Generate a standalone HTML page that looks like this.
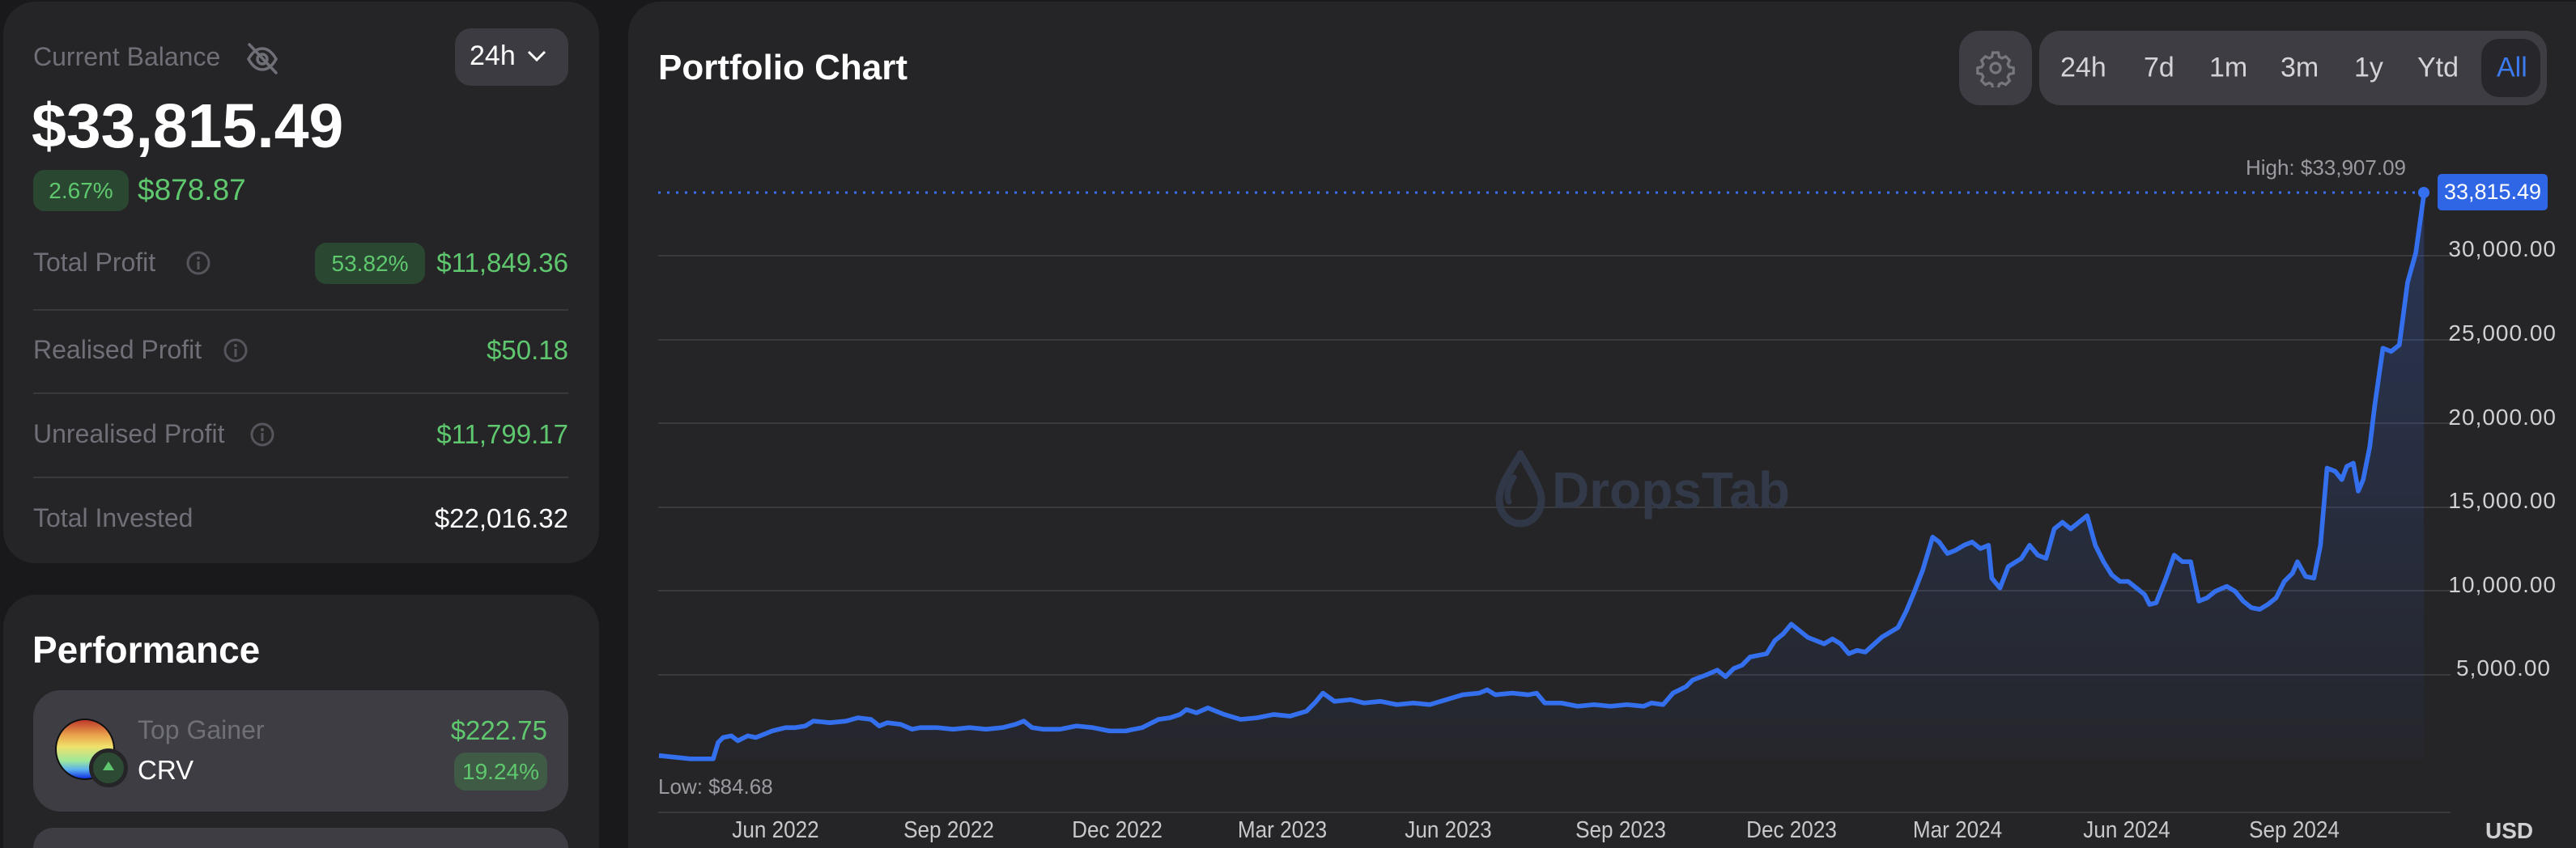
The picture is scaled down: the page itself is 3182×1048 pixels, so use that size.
<!DOCTYPE html>
<html><head><meta charset="utf-8"><style>
*{margin:0;padding:0;box-sizing:border-box}
html,body{width:3182px;height:1048px;overflow:hidden}
body{background:#19191c;font-family:"Liberation Sans",sans-serif;position:relative}
.a{position:absolute;white-space:nowrap}
.card{position:absolute;background:#252528;border-radius:40px}
.g{color:#5fc86e}.mut{color:#6f6f77}
.badge{position:absolute;background:#2a4731;border-radius:14px;color:#5fc86e;text-align:center}
.div{position:absolute;left:41px;width:661px;height:2px;background:#38383d}
.tl{font-size:32px;color:#6f6f77}
.per{font-size:34px;color:#d4d4d8;transform:translateY(-50%)}
.yl{font-size:28px;color:#d0d0d4;right:24px;letter-spacing:1px}
.xl{font-size:29px;color:#c8c8cc;top:1010px;transform:translateX(-50%) scaleX(.9)}
</style></head><body>
<div class="card" style="left:4px;top:2px;width:736px;height:694px"></div>
<div class="a tl" style="left:41px;top:52px">Current Balance</div>
<svg class="a" style="left:302px;top:50px" width="44" height="44" viewBox="0 0 44 44"><g fill="none" stroke="#6f6f77" stroke-width="3.5" stroke-linecap="round"><path d="M5 23c5-9 11-13 17-13s12 4 17 13c-5 9-11 13-17 13S10 32 5 23z"/><circle cx="22" cy="23" r="6"/><path d="M6 5l33 35"/></g></svg>
<div class="a" style="left:562px;top:35px;width:140px;height:71px;background:#3c3b41;border-radius:20px"></div>
<div class="a" style="left:580px;top:50px;font-size:34px;color:#fff">24h</div>
<svg class="a" style="left:650px;top:60px" width="26" height="18"><path d="M3 4l10 10 10-10" fill="none" stroke="#fff" stroke-width="3"/></svg>
<div class="a" style="left:39px;top:112px;font-size:77px;font-weight:bold;color:#fff">$33,815.49</div>
<div class="badge" style="left:41px;top:210px;width:118px;height:51px;line-height:51px;font-size:28px">2.67%</div>
<div class="a g" style="left:170px;top:214px;font-size:37px">$878.87</div>
<div class="a tl" style="left:41px;top:306px">Total Profit</div>
<svg class="a" style="left:229px;top:309px" width="32" height="32"><circle cx="16" cy="16" r="13" fill="none" stroke="#55555c" stroke-width="3"/><rect x="14.5" y="14" width="3" height="10" fill="#55555c"/><circle cx="16" cy="10" r="2" fill="#55555c"/></svg>
<div class="badge" style="left:389px;top:300px;width:136px;height:51px;line-height:51px;font-size:28px">53.82%</div>
<div class="a g" style="left:535px;top:306px;font-size:33px;width:167px;text-align:right">$11,849.36</div>
<div class="div" style="top:382px"></div>
<div class="a tl" style="left:41px;top:414px">Realised Profit</div>
<svg class="a" style="left:275px;top:417px" width="32" height="32"><circle cx="16" cy="16" r="13" fill="none" stroke="#55555c" stroke-width="3"/><rect x="14.5" y="14" width="3" height="10" fill="#55555c"/><circle cx="16" cy="10" r="2" fill="#55555c"/></svg>
<div class="a g" style="left:500px;top:414px;font-size:33px;width:202px;text-align:right">$50.18</div>
<div class="div" style="top:485px"></div>
<div class="a tl" style="left:41px;top:518px">Unrealised Profit</div>
<svg class="a" style="left:308px;top:521px" width="32" height="32"><circle cx="16" cy="16" r="13" fill="none" stroke="#55555c" stroke-width="3"/><rect x="14.5" y="14" width="3" height="10" fill="#55555c"/><circle cx="16" cy="10" r="2" fill="#55555c"/></svg>
<div class="a g" style="left:500px;top:518px;font-size:33px;width:202px;text-align:right">$11,799.17</div>
<div class="div" style="top:589px"></div>
<div class="a tl" style="left:41px;top:622px">Total Invested</div>
<div class="a" style="left:500px;top:622px;font-size:33px;width:202px;text-align:right;color:#fff">$22,016.32</div>

<div class="card" style="left:4px;top:735px;width:736px;height:313px;border-radius:40px 40px 0 0"></div>
<div class="a" style="left:40px;top:776px;font-size:46px;font-weight:bold;color:#fff">Performance</div>
<div class="a" style="left:41px;top:853px;width:661px;height:150px;background:#3e3d44;border-radius:34px"></div>
<div class="a" style="left:68px;top:888px;width:74px;height:76px;border-radius:50%;border:2px solid #111;background:linear-gradient(#c0392b 0%,#e8a04a 25%,#f0e06a 45%,#9ee89a 70%,#5ab0f0 85%,#1030e0 100%)"></div>
<div class="a" style="left:110px;top:925px;width:48px;height:48px;border-radius:50%;background:#2c4a34;border:5px solid #252528"></div>
<svg class="a" style="left:124px;top:938px" width="20" height="18"><path d="M10 3l7 11H3z" fill="#5fc86e"/></svg>
<div class="a" style="left:170px;top:884px;font-size:32px;color:#6f6f77">Top Gainer</div>
<div class="a" style="left:170px;top:933px;font-size:33px;color:#fff">CRV</div>
<div class="a g" style="left:500px;top:884px;font-size:33px;width:176px;text-align:right">$222.75</div>
<div class="a" style="left:561px;top:930px;width:115px;height:47px;background:#3f5a45;border-radius:14px;color:#5fc86e;font-size:28px;text-align:center;line-height:47px">19.24%</div>
<div class="a" style="left:41px;top:1023px;width:661px;height:25px;background:#3e3d44;border-radius:34px 34px 0 0"></div>

<div class="card" style="left:776px;top:2px;width:2406px;height:1046px;border-radius:40px 0 0 0"></div>
<div class="a" style="left:813px;top:59px;font-size:44px;font-weight:bold;color:#fff">Portfolio Chart</div>
<div class="a" style="left:2420px;top:38px;width:90px;height:92px;background:#3e3d44;border-radius:26px"></div>
<svg class="a" style="left:2441px;top:60px" width="48" height="48" viewBox="0 0 24 24"><g fill="none" stroke="#77777e" stroke-width="1.6"><circle cx="12" cy="12" r="3"/><path d="M10.3 2.5h3.4l.5 2.6 1.7.9 2.4-1.1 2.4 2.4-1.1 2.4.9 1.7 2.6.5v3.4l-2.6.5-.9 1.7 1.1 2.4-2.4 2.4-2.4-1.1-1.700.9-.5 2.6h-3.4l-.5-2.6-1.7-.9-2.4 1.1-2.4-2.4 1.1-2.4-.9-1.7-2.6-.5v-3.4l2.6-.5.9-1.7-1.1-2.4 2.4-2.4 2.4 1.1 1.7-.9z"/></g></svg>
<div class="a" style="left:2519px;top:38px;width:627px;height:92px;background:#3e3d44;border-radius:26px"></div>
<div class="a" style="left:3065px;top:48px;width:73px;height:72px;background:#27272b;border-radius:22px"></div>
<div class="a per" style="left:2545px;top:84px">24h</div>
<div class="a per" style="left:2648px;top:84px">7d</div>
<div class="a per" style="left:2729px;top:84px">1m</div>
<div class="a per" style="left:2817px;top:84px">3m</div>
<div class="a per" style="left:2908px;top:84px">1y</div>
<div class="a per" style="left:2986px;top:84px">Ytd</div>
<div class="a per" style="left:3084px;top:84px;color:#3b7af0">All</div>

<svg class="a" style="left:0;top:0" width="3182" height="1048">
<defs><linearGradient id="f" x1="0" y1="0" x2="0" y2="1"><stop offset="0" stop-color="#3b6ef0" stop-opacity=".22"/><stop offset="1" stop-color="#3b6ef0" stop-opacity=".02"/></linearGradient></defs>
<g stroke="#3a3a3f" stroke-width="2">
<line x1="813" y1="316" x2="3027" y2="316"/><line x1="813" y1="420" x2="3027" y2="420"/><line x1="813" y1="523" x2="3027" y2="523"/><line x1="813" y1="627" x2="3027" y2="627"/><line x1="813" y1="730" x2="3027" y2="730"/><line x1="813" y1="834" x2="3027" y2="834"/><line x1="813" y1="1004" x2="3027" y2="1004"/></g>
<line x1="813" y1="238" x2="3000" y2="238" stroke="#3b6ef0" stroke-width="3" stroke-dasharray="3 8"/>
<g opacity=".9"><path d="M1876 565c-14 22-24 38-24 52 0 18 12 30 26 30s26-12 26-30c0-12-10-28-26-56" fill="none" stroke="#323a4a" stroke-width="9" stroke-linecap="round"/><path d="M1870 590c-8 14-10 22-6 30" fill="none" stroke="#323a4a" stroke-width="7" stroke-linecap="round"/></g>
<text x="1917" y="628" font-size="64" font-weight="bold" fill="#323a4a" font-family="Liberation Sans">DropsTab</text>
<g transform="matrix(2.03,0,0,2.03,0,4)">
<path fill="url(#f)" d="M401,458 L420,460 434,460 437,450 440,447 445,446 449,449 455,446 460,447 465,445 470,443 478,441 484,441 490,440 495,437 505,438 515,437 522,435 530,436 535,440 540,438 548,439 555,442 560,441 570,441 580,442 590,441 600,442 610,441 618,439 623,437 628,441 635,442 645,442 655,440 665,441 675,443 685,443 695,441 705,436 712,435 718,433 722,430 728,432 735,429 745,433 755,436 765,435 775,433 785,434 795,431 800,426 805,420 812,425 822,424 830,426 840,425 850,427 860,426 870,427 880,424 890,421 900,420 905,418 910,421 920,420 930,421 935,420 940,426 950,426 960,428 970,427 980,428 990,427 1000,428 1005,426 1012,427 1018,420 1022,418 1026,416 1030,412 1038,409 1045,406 1050,410 1055,405 1060,403 1065,398 1075,396 1080,388 1085,384 1090,378 1100,386 1110,390 1115,387 1120,390 1125,396 1130,394 1135,395 1145,386 1155,380 1160,370 1165,358 1170,345 1176,325 1180,328 1185,335 1190,333 1195,330 1200,328 1205,332 1210,330 1212,350 1217,356 1222,343 1230,338 1235,330 1240,336 1245,338 1250,320 1255,316 1260,320 1265,316 1270,312 1275,330 1280,340 1285,348 1290,352 1295,352 1300,356 1305,360 1308,366 1312,365 1318,350 1323,336 1328,340 1333,340 1338,364 1343,362 1348,358 1355,355 1360,358 1365,364 1370,368 1375,369 1380,366 1385,362 1390,352 1395,347 1398,340 1403,349 1408,350 1412,330 1416,283 1421,285 1425,290 1428,282 1432,280 1435,297 1438,290 1440,280 1442,270 1445,245 1450,210 1455,212 1460,208 1465,170 1470,152 1475,116 L1475,460 L401,460Z"/>
<polyline fill="none" stroke="#3470ee" stroke-width="2.8" stroke-linejoin="round" points="401,458 420,460 434,460 437,450 440,447 445,446 449,449 455,446 460,447 465,445 470,443 478,441 484,441 490,440 495,437 505,438 515,437 522,435 530,436 535,440 540,438 548,439 555,442 560,441 570,441 580,442 590,441 600,442 610,441 618,439 623,437 628,441 635,442 645,442 655,440 665,441 675,443 685,443 695,441 705,436 712,435 718,433 722,430 728,432 735,429 745,433 755,436 765,435 775,433 785,434 795,431 800,426 805,420 812,425 822,424 830,426 840,425 850,427 860,426 870,427 880,424 890,421 900,420 905,418 910,421 920,420 930,421 935,420 940,426 950,426 960,428 970,427 980,428 990,427 1000,428 1005,426 1012,427 1018,420 1022,418 1026,416 1030,412 1038,409 1045,406 1050,410 1055,405 1060,403 1065,398 1075,396 1080,388 1085,384 1090,378 1100,386 1110,390 1115,387 1120,390 1125,396 1130,394 1135,395 1145,386 1155,380 1160,370 1165,358 1170,345 1176,325 1180,328 1185,335 1190,333 1195,330 1200,328 1205,332 1210,330 1212,350 1217,356 1222,343 1230,338 1235,330 1240,336 1245,338 1250,320 1255,316 1260,320 1265,316 1270,312 1275,330 1280,340 1285,348 1290,352 1295,352 1300,356 1305,360 1308,366 1312,365 1318,350 1323,336 1328,340 1333,340 1338,364 1343,362 1348,358 1355,355 1360,358 1365,364 1370,368 1375,369 1380,366 1385,362 1390,352 1395,347 1398,340 1403,349 1408,350 1412,330 1416,283 1421,285 1425,290 1428,282 1432,280 1435,297 1438,290 1440,280 1442,270 1445,245 1450,210 1455,212 1460,208 1465,170 1470,152 1475,116"/>
</g>
<circle cx="2994" cy="238" r="7" fill="#3470ee"/>
</svg>
<div class="a" style="right:210px;top:192px;font-size:26px;color:#9a9aa0">High: $33,907.09</div>
<div class="a" style="left:3011px;top:215px;width:136px;height:45px;background:#2f66e6;border-radius:5px;color:#fff;font-size:27px;text-align:center;line-height:45px">33,815.49</div>
<div class="a yl" style="top:292px">30,000.00</div>
<div class="a yl" style="top:396px">25,000.00</div>
<div class="a yl" style="top:500px">20,000.00</div>
<div class="a yl" style="top:603px">15,000.00</div>
<div class="a yl" style="top:707px">10,000.00</div>
<div class="a yl" style="top:810px;right:31px">5,000.00</div>
<div class="a" style="left:813px;top:957px;font-size:26px;color:#9a9aa0">Low: $84.68</div>
<div class="a xl" style="left:958px">Jun 2022</div>
<div class="a xl" style="left:1172px">Sep 2022</div>
<div class="a xl" style="left:1380px">Dec 2022</div>
<div class="a xl" style="left:1584px">Mar 2023</div>
<div class="a xl" style="left:1789px">Jun 2023</div>
<div class="a xl" style="left:2002px">Sep 2023</div>
<div class="a xl" style="left:2213px">Dec 2023</div>
<div class="a xl" style="left:2418px">Mar 2024</div>
<div class="a xl" style="left:2627px">Jun 2024</div>
<div class="a xl" style="left:2834px">Sep 2024</div>
<div class="a" style="left:3070px;top:1011px;font-size:28px;font-weight:bold;color:#d0d0d4">USD</div>
</body></html>
